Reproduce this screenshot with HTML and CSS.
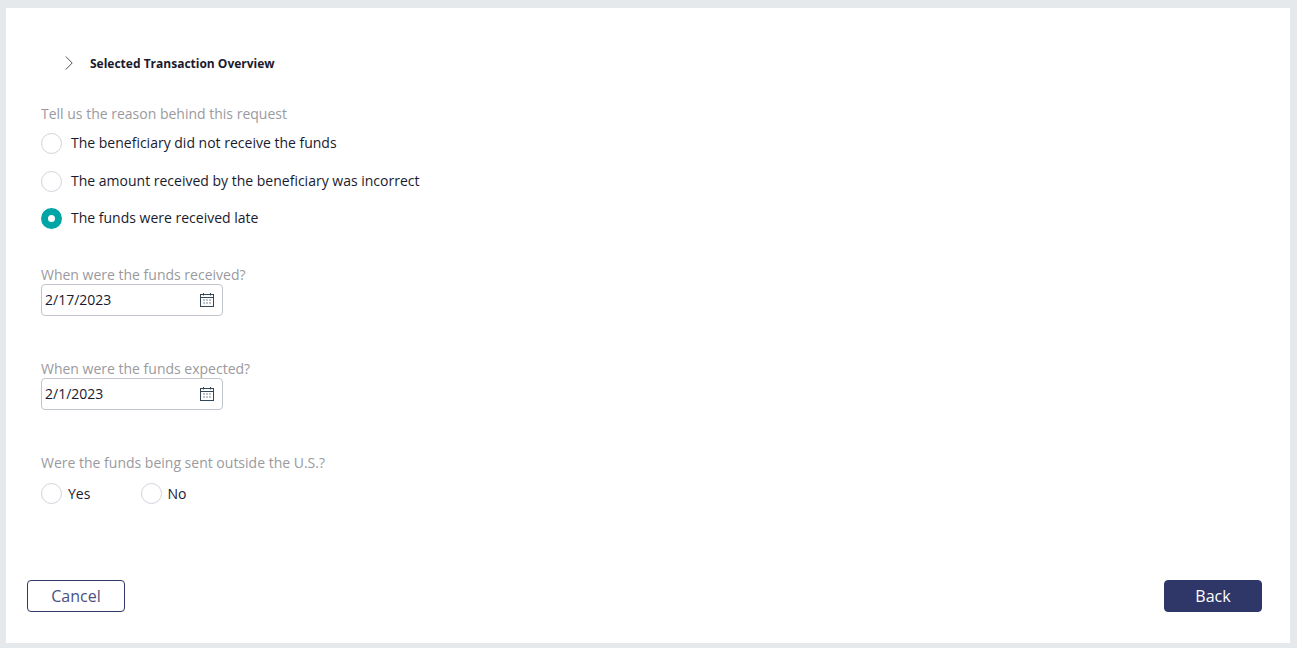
FILE: index.html
```html
<!DOCTYPE html>
<html lang="en">
<head>
<meta charset="utf-8">
<title>Selected Transaction Overview</title>
<link rel="stylesheet" href="styles.css">
</head>
<body>
<main class="panel">
  <div class="content">
    <div class="overview">
      <svg class="chevron" width="8" height="14" viewBox="0 0 8 14"><path d="M0.8 0.5 L7.2 7 L0.8 13.5" fill="none" stroke="#4a5560" stroke-width="1"/></svg>
      <span class="overview-title">Selected Transaction Overview</span>
    </div>
    <div class="field-reason">
      <div class="label">Tell us the reason behind this request</div>
      <div class="radio-list">
        <label class="radio-row"><span class="radio"></span><span>The beneficiary did not receive the funds</span></label>
        <label class="radio-row"><span class="radio"></span><span>The amount received by the beneficiary was incorrect</span></label>
        <label class="radio-row"><span class="radio radio-on"></span><span>The funds were received late</span></label>
      </div>
    </div>
    <div class="field-date first">
      <div class="label">When were the funds received?</div>
      <div class="date-input"><span>2/17/2023</span>
        <svg class="cal" width="14" height="14" viewBox="0 0 14 14"><path d="M3.5 0V2.5M10.5 0V2.5" stroke="#33475b" fill="none"/><rect x="0.5" y="1.5" width="13" height="12" fill="none" stroke="#33475b"/><path d="M0.5 4.5H13.5" stroke="#33475b"/><path d="M3 7h2M6 7h2M9 7h2M3 10h2M6 10h2M9 10h2" stroke="#7d8a97"/></svg>
      </div>
    </div>
    <div class="field-date">
      <div class="label">When were the funds expected?</div>
      <div class="date-input"><span>2/1/2023</span>
        <svg class="cal" width="14" height="14" viewBox="0 0 14 14"><path d="M3.5 0V2.5M10.5 0V2.5" stroke="#33475b" fill="none"/><rect x="0.5" y="1.5" width="13" height="12" fill="none" stroke="#33475b"/><path d="M0.5 4.5H13.5" stroke="#33475b"/><path d="M3 7h2M6 7h2M9 7h2M3 10h2M6 10h2M9 10h2" stroke="#7d8a97"/></svg>
      </div>
    </div>
    <div class="field-outside">
      <div class="label">Were the funds being sent outside the U.S.?</div>
      <div class="radio-inline">
        <label class="inline-option"><span class="radio"></span><span>Yes</span></label>
        <label class="inline-option"><span class="radio"></span><span>No</span></label>
      </div>
    </div>
  </div>
  <div class="actions">
    <button class="btn btn-outline" type="button">Cancel</button>
    <button class="btn btn-solid" type="button">Back</button>
  </div>
</main>
</body>
</html>
```
FILE: styles.css
```css
* { box-sizing: border-box; }
html, body { height: 100%; }
body {
  margin: 0;
  padding: 8px 7px 5px 6px;
  background: #e5e9ec;
  font-family: "Open Sans", "Liberation Sans", sans-serif;
  font-size: 14px;
  color: #1a1a2e;
  overflow: hidden;
}
.panel {
  height: 635px;
  background: #fff;
  display: flex;
  flex-direction: column;
  justify-content: space-between;
  padding: 0 28px 31px 21px;
}
.content { padding: 46px 0 0 14px; }
.overview {
  display: flex;
  align-items: center;
  height: 18px;
  padding-left: 24px;
}
.chevron { display: block; }
.overview-title {
  margin-left: 17px;
  font-size: 12px;
  font-weight: 700;
  color: #1a1a2e;
}
.label { color: #9a9a9e; line-height: 19px; height: 19px; }
.field-reason { margin-top: 32px; }
.radio-list { display: flex; flex-direction: column; margin-top: 1px; }
.radio-row {
  display: flex;
  align-items: center;
  gap: 9px;
  height: 37.5px;
}
.radio-row .radio { margin-top: 2px; }
.radio {
  width: 21px;
  height: 21px;
  border-radius: 50%;
  border: 1px solid #cfd4da;
  background: #fff;
  flex: none;
}
.radio-on { border: 7px solid #00a6a6; }
.field-date { margin-top: 43px; }
.field-date.first { margin-top: 28px; }
.date-input {
  width: 182px;
  height: 32px;
  border: 1px solid #c1c6ce;
  border-radius: 4px;
  display: flex;
  align-items: center;
  justify-content: space-between;
  padding: 0 8px 0 3px;
  color: #1a1a2e;
}
.cal { display: block; }
.field-outside { margin-top: 43px; }
.radio-inline { display: flex; gap: 51px; margin-top: 11px; height: 22px; align-items: center; }
.inline-option { display: flex; align-items: center; gap: 6px; }
.inline-option + .inline-option { gap: 5px; }
.actions { display: flex; justify-content: space-between; }
.btn {
  width: 98px;
  height: 32px;
  border-radius: 4px;
  font-family: inherit;
  font-size: 16px;
  padding: 0;
}
.btn-outline { background: #fff; border: 1px solid #2e3768; color: #4a5080; }
.btn-solid { background: #2e3768; border: 1px solid #2e3768; color: #fff; }
```
